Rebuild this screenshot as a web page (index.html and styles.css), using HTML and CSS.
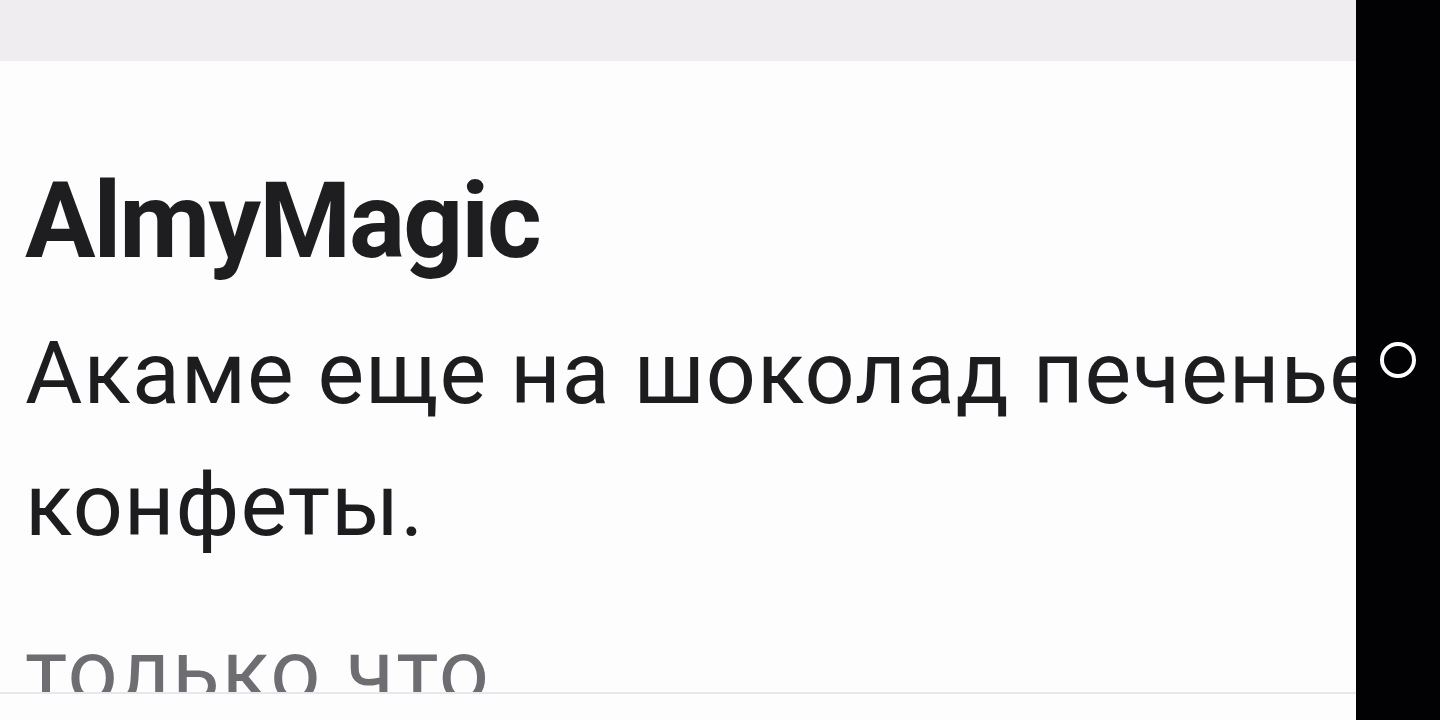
FILE: index.html
```html
<!DOCTYPE html>
<html lang="ru">
<head>
<meta charset="utf-8">
<title>AlmyMagic</title>
<link rel="stylesheet" href="styles.css">
</head>
<body>
<div class="device">
  <main class="screen">
    <div class="topbar"></div>
    <section class="card">
      <h1 class="author">AlmyMagic</h1>
      <p class="message">Акаме еще на шоколад печенье конфеты.</p>
      <p class="time">только что</p>
    </section>
    <div class="divider"></div>
    <div class="rest"></div>
  </main>
  <aside class="navbar">
    <span class="home"></span>
  </aside>
</div>
</body>
</html>
```

FILE: styles.css
```css
html, body {
  margin: 0;
  padding: 0;
  height: 100%;
  background: #fefdfe;
}

.device {
  display: flex;
  width: 1440px;
  height: 720px;
  overflow: hidden;
  font-family: Roboto, "Noto Sans", sans-serif;
}

.screen {
  flex: 0 0 1356px;
  display: flex;
  flex-direction: column;
  overflow: hidden;
  background: #fefdfe;
}

.topbar {
  flex: 0 0 61px;
  background: #efedf0;
}

.card {
  flex: 0 0 631px;
  width: 1440px;
  box-sizing: border-box;
  padding: 98px 25px 0;
  overflow: hidden;
  background: #fefdfe;
}

.author {
  margin: 0;
  font-size: 105px;
  line-height: 126px;
  font-weight: 700;
  color: #1e1d20;
  letter-spacing: -2px;
}

.message {
  margin: 22px 0 0;
  font-size: 88px;
  line-height: 132px;
  font-weight: 400;
  color: #1d1c1f;
  letter-spacing: 1px;
}

.time {
  margin: 34px 0 0;
  font-size: 88px;
  line-height: 132px;
  color: #6e6d71;
  letter-spacing: 2px;
}

.divider {
  flex: 0 0 2px;
  background: #e9e7eb;
}

.rest {
  flex: 1;
  background: #fefdfe;
}

.navbar {
  flex: 0 0 84px;
  background: #020103;
  display: flex;
  align-items: center;
  justify-content: center;
}

.home {
  width: 28px;
  height: 28px;
  border: 4px solid #fefefe;
  border-radius: 50%;
}
```
